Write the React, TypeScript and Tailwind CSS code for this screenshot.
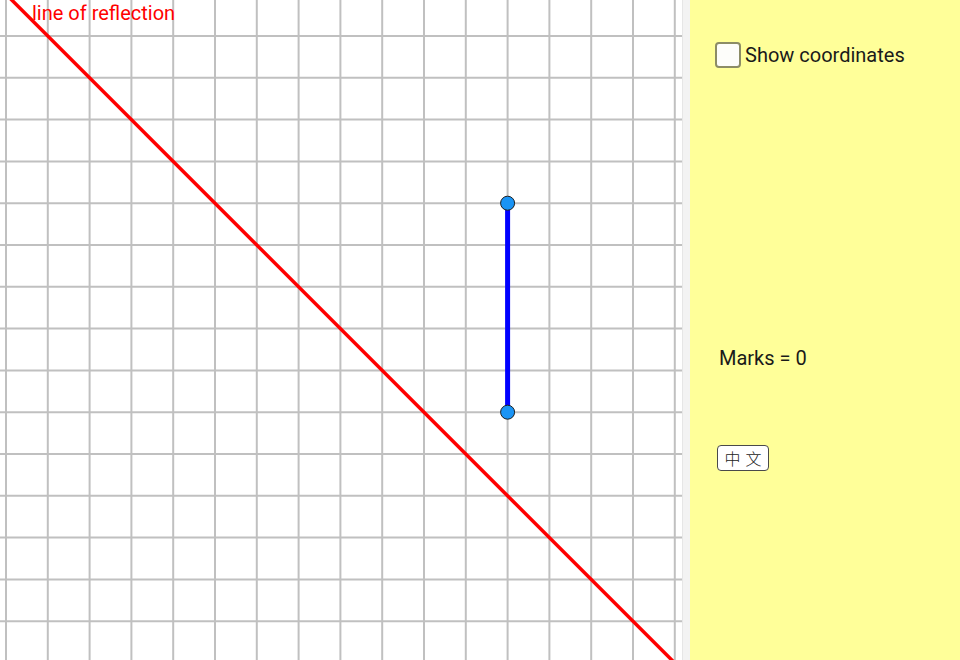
import React from "react";

const STEP = 41.8;

function Grid() {
  const vs: number[] = [];
  for (let k = 0; k <= 16; k++) vs.push(6 + STEP * k);
  const hs: number[] = [];
  for (let k = 0; k <= 14; k++) hs.push(36 + STEP * k);
  return (
    <svg width={682} height={660} viewBox="0 0 682 660" className="block">
      <rect x={0} y={0} width={682} height={660} fill="#ffffff" />
      {hs.map((y) => (
        <line key={"h" + y} x1={0} x2={682} y1={y} y2={y} stroke="#c0c0c0" strokeWidth={2} />
      ))}
      {vs.map((x) => (
        <line key={"v" + x} x1={x} x2={x} y1={0} y2={660} stroke="#c0c0c0" strokeWidth={2} />
      ))}
      <line x1={11.8 - 20} y1={-20} x2={11.8 + 700} y2={700} stroke="#ff0000" strokeWidth={3.5} />
      <line x1={507.6} y1={203.2} x2={507.6} y2={412.2} stroke="#0000ff" strokeWidth={5} />
      <circle cx={507.6} cy={203.2} r={7} fill="#1a94f5" stroke="#1f1f1f" strokeWidth={1} />
      <circle cx={507.6} cy={412.2} r={7} fill="#1a94f5" stroke="#1f1f1f" strokeWidth={1} />
    </svg>
  );
}

export default function App() {
  return (
    <div
      className="flex w-[960px] h-[660px] overflow-hidden bg-white"
      style={{ fontFamily: "Roboto, 'Noto Sans', sans-serif" }}
    >
      <div className="relative w-[682px] h-[660px] shrink-0">
        <Grid />
        <span className="absolute left-[32px] top-[0px] text-[20px] leading-[26px] text-[#ff0000]">
          line of reflection
        </span>
      </div>
      <div className="w-[8px] h-full shrink-0 bg-[#f3f3f3] border-l border-[#e6e6e6]" />
      <div className="flex-1 h-full bg-[#ffff99] flex flex-col pl-[25px]">
        <div className="mt-[42px] flex items-center h-[26px]">
          <div className="w-[26px] h-[26px] rounded-[4px] border-2 border-[#8c8c66] bg-[#fdfdfa]" />
          <span className="ml-[4px] text-[20px] leading-[26px] text-[#1a1a1a]">Show coordinates</span>
        </div>
        <div className="mt-[277px] ml-[4px] text-[20px] leading-[26px] text-[#1a1a1a]">Marks = 0</div>
        <div className="mt-[74px] ml-[2px]">
          <button
            className="w-[52px] h-[26px] rounded-[4px] border-[1.5px] border-[#4a4a4a] bg-white flex items-center justify-center text-[16px] tracking-[5px] pl-[5px] text-[#222] font-light"
            style={{ fontFamily: "'Noto Sans CJK TC', 'Noto Sans CJK SC', sans-serif" }}
          >
            中文
          </button>
        </div>
      </div>
    </div>
  );
}
